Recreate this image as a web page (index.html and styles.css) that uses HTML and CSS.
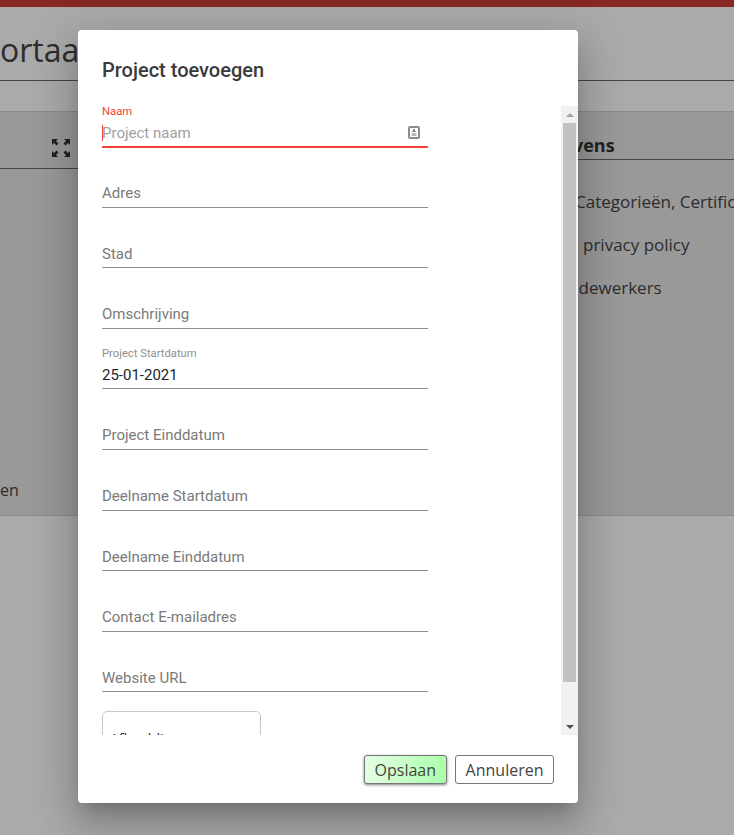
FILE: index.html
```html
<!DOCTYPE html>
<html lang="en">
<head>
    <meta charset="UTF-8">
    <meta name="viewport" content="width=device-width, initial-scale=1.0">
    <title>Project toevoegen</title>
    <link rel="stylesheet" href="styles.css">
</head>
<body>
    <div class="page">
        <div class="topbar"></div>
        <h1 class="page-title">ortaal</h1>
        <div class="tabs-row"></div>
        <div class="panels">
            <div class="panel-left">
                <div class="panel-head">
                    <svg class="expand-icon" viewBox="0 0 20 20" width="20" height="20">
                        <path d="M1 1h6L5 3l2.500 2.500L5.500 7.500 3 5 1 7zM19 1v6l-2-2-2.500 2.500-2-2L15 3l-2-2zM1 19v-6l2 2 2.500-2.500 2 2L5 17l2 2zM19 19h-6l2-2-2.500-2.500 2-2L17 15l2-2z"/>
                    </svg>
                </div>
                <div class="panel-foot">en</div>
            </div>
            <div class="panel-right">
                <h2 class="panel-title">vens</h2>
                <ul class="panel-list">
                    <li>Categorieën, Certificaten</li>
                    <li class="indent">privacy policy</li>
                    <li class="indent2">edewerkers</li>
                </ul>
            </div>
        </div>
    </div>

    <div class="overlay">
        <div class="dialog">
            <h2 class="dialog-title">Project toevoegen</h2>
            <div class="dialog-body">
                <div class="form-scroll">
                    <div class="field focused">
                        <span class="float-label">Naam</span>
                        <input class="field-input" type="text" placeholder="Project naam">
                        <svg class="contact-icon" viewBox="0 0 12 13" width="12" height="13">
                            <rect x="1" y="1" width="10" height="11" rx="1" fill="#fff" stroke="#8c8c8c" stroke-width="2"/>
                            <path d="M5 3h2v2h1v1H4V5h1z" fill="#8c8c8c"/>
                            <path d="M3.500 7h5v3h-5z" fill="#b8b8b8"/>
                        </svg>
                    </div>
                    <div class="field"><input class="field-input" type="text" placeholder="Adres"></div>
                    <div class="field"><input class="field-input" type="text" placeholder="Stad"></div>
                    <div class="field"><input class="field-input" type="text" placeholder="Omschrijving"></div>
                    <div class="field">
                        <span class="float-label">Project Startdatum</span>
                        <input class="field-input" type="text" value="25-01-2021">
                    </div>
                    <div class="field"><input class="field-input" type="text" placeholder="Project Einddatum"></div>
                    <div class="field"><input class="field-input" type="text" placeholder="Deelname Startdatum"></div>
                    <div class="field"><input class="field-input" type="text" placeholder="Deelname Einddatum"></div>
                    <div class="field"><input class="field-input" type="text" placeholder="Contact E-mailadres"></div>
                    <div class="field"><input class="field-input" type="text" placeholder="Website URL"></div>
                    <div class="upload-box">Afbeelding</div>
                </div>
                <div class="scrollbar">
                    <div class="sb-btn"><span class="sb-up"></span></div>
                    <div class="sb-track"><div class="sb-thumb"></div></div>
                    <div class="sb-btn"><span class="sb-down"></span></div>
                </div>
            </div>
            <div class="dialog-actions">
                <button class="btn btn-save">Opslaan</button>
                <button class="btn">Annuleren</button>
            </div>
        </div>
    </div>
</body>
</html>
```

FILE: styles.css
```css
html, body {
    margin: 0;
    height: 100%;
    overflow: hidden;
}

body {
    background-color: #fff;
    font-family: "Open Sans", sans-serif;
    color: #444;
}

.page {
    width: 734px;
}

.topbar {
    height: 7px;
    background-color: #cb3e33;
}

.page-title {
    margin: 0;
    height: 74px;
    box-sizing: border-box;
    padding-top: 23px;
    font-size: 32px;
    font-weight: 400;
    line-height: 40px;
    border-bottom: 1px solid #666;
}

.tabs-row {
    height: 30px;
    border-bottom: 1px solid #cfcfcf;
}

.panels {
    display: flex;
    height: 403px;
    background-color: #e6e6e6;
    border-bottom: 1px solid #cfcfcf;
}

.panel-left {
    width: 500px;
    display: flex;
    flex-direction: column;
}

.panel-head {
    height: 57px;
    box-sizing: border-box;
    border-bottom: 1px solid #666;
    padding: 26px 0 0 51px;
}

.expand-icon {
    display: block;
    fill: #333;
}

.panel-foot {
    margin-top: auto;
    padding-bottom: 14px;
    font-size: 16px;
    line-height: 22px;
}

.panel-right {
    flex: 1;
    overflow: hidden;
}

.panel-title {
    margin: 0;
    height: 48px;
    box-sizing: border-box;
    padding: 20px 0 0 73px;
    font-size: 18px;
    font-weight: 700;
    line-height: 26px;
    color: #333;
    border-bottom: 1px solid #666;
}

.panel-list {
    list-style: none;
    margin: 0;
    padding: 30px 0 0 75px;
    font-size: 17px;
    white-space: nowrap;
}

.panel-list li {
    height: 43px;
    line-height: 24px;
}

.panel-list .indent {
    padding-left: 8px;
}

.panel-list .indent2 {
    margin-left: -6px;
}

.overlay {
    position: absolute;
    inset: 0;
    background-color: rgba(0, 0, 0, .335);
}

.dialog {
    position: absolute;
    left: 78px;
    top: 30px;
    width: 500px;
    height: 773px;
    display: flex;
    flex-direction: column;
    background-color: #fff;
    border-radius: 4px;
    box-shadow: 0 11px 15px -7px rgba(0, 0, 0, .2), 0 24px 38px 3px rgba(0, 0, 0, .14), 0 9px 46px 8px rgba(0, 0, 0, .12);
}

.dialog-title {
    margin: 0;
    padding: 28px 24px 0;
    height: 76px;
    box-sizing: border-box;
    font-family: Roboto, sans-serif;
    font-size: 20px;
    font-weight: 500;
    line-height: 24px;
    color: #3a3a3a;
}

.dialog-body {
    height: 629px;
    display: flex;
}

.form-scroll {
    flex: 1;
    padding-left: 24px;
    overflow: hidden;
}

.scrollbar {
    width: 17px;
    display: flex;
    flex-direction: column;
    background-color: #f1f1f1;
}

.sb-btn {
    height: 17px;
    display: flex;
    align-items: center;
    justify-content: center;
}

.sb-up {
    border: 4px solid transparent;
    border-top: 0;
    border-bottom-color: #a3a3a3;
}

.sb-down {
    border: 4px solid transparent;
    border-bottom: 0;
    border-top-color: #505050;
}

.sb-track {
    flex: 1;
    padding: 0 2px;
}

.sb-thumb {
    height: 559px;
    background-color: #c1c1c1;
}

.field {
    position: relative;
    width: 326px;
    height: 60.55px;
    box-sizing: border-box;
    display: flex;
    align-items: flex-end;
    border-bottom: 1px solid #8f8f8f;
}

.field.focused {
    height: 42px;
    margin-bottom: -.75px;
    border-bottom: 2px solid #f44336;
}

.field-input {
    width: 100%;
    height: 28px;
    padding: .9px 0 0;
    box-sizing: border-box;
    border: 0;
    outline: 0;
    background: transparent;
    font-family: Roboto, sans-serif;
    font-size: 15px;
    color: #212529;
}

.focused .field-input {
    padding-top: 2px;
}

.field-input::placeholder {
    color: #7a7a7a;
    opacity: 1;
}

.focused .field-input::placeholder {
    color: #a0a0a0;
}

.focused::after {
    content: "";
    position: absolute;
    left: 0;
    bottom: 5px;
    width: 1px;
    height: 16px;
    background-color: #f44336;
}

.float-label {
    position: absolute;
    left: 0;
    bottom: 27px;
    font-family: Roboto, sans-serif;
    font-size: 11.25px;
    line-height: 14px;
    color: #8f8f8f;
}

.focused .float-label {
    color: #f44336;
}

.contact-icon {
    position: absolute;
    right: 8px;
    bottom: 7px;
}

.upload-box {
    width: 159px;
    height: 64px;
    margin-top: 19px;
    box-sizing: border-box;
    padding: 17px 0 0 7px;
    border: 1px solid #c8c8c8;
    border-radius: 5px;
    font-size: 14px;
    color: #212529;
}

.dialog-actions {
    flex: 1;
    display: flex;
    justify-content: flex-end;
    align-items: flex-start;
    gap: 8px;
    padding: 20px 24px 0 0;
}

.btn {
    height: 29px;
    padding: 0 9.5px;
    border: 1px solid #777;
    border-radius: 3px;
    background-color: #fff;
    font-family: "Open Sans", sans-serif;
    font-size: 16px;
    color: #444;
}

.btn-save {
    padding: 0 10px;
    background-image: linear-gradient(to right, #e4ffe4, #aaffaa);
    box-shadow: 0 1px 3px rgba(0, 0, 0, .5);
}
```
